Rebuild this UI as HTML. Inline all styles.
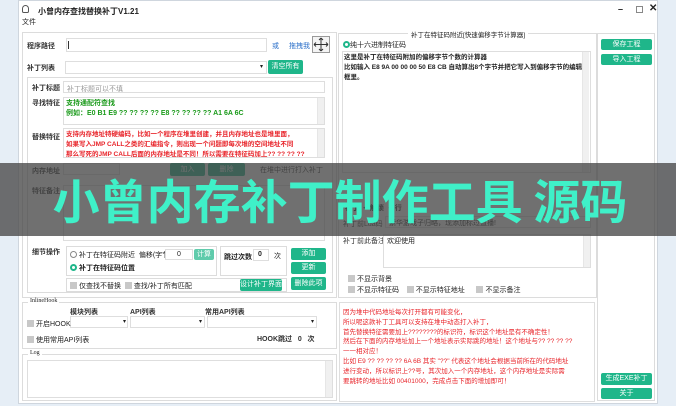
<!DOCTYPE html>
<html><head><meta charset="utf-8"><style>
*{margin:0;padding:0;box-sizing:border-box}
body{width:676px;height:406px;overflow:hidden;background:#e6eef6;font-family:"Liberation Sans","Noto Sans CJK SC",sans-serif;font-size:7px;color:#222;position:relative}
.a{position:absolute}
.win{left:18px;top:0;width:640px;height:404px;background:#fff;border:1px solid #cfd6de}
.box{position:absolute;border:1px solid #dcdcdc;background:#fff}
.inp{position:absolute;border:1px solid #dedede;background:#fff}
.lbl{position:absolute;font-weight:bold;font-size:7px;color:#333;white-space:nowrap}
.btn{position:absolute;background:#1fb68a;color:#fff;font-size:7px;text-align:center;border-radius:2px;white-space:nowrap}
.cb{display:inline-block;width:7px;height:7px;background:#c8c8c8;vertical-align:-1px;margin-right:2px}
.t{position:absolute;white-space:nowrap}
.sb{position:absolute;width:7px;background:#f0f0f0;border-left:1px solid #e6e6e6}
</style></head><body>
<div class="a win"></div>
<div class="a" style="left:22px;top:5px;width:7px;height:8px;border:1px solid #555;border-radius:4px 4px 2px 2px"></div>
<div class="t" style="left:38px;top:6px;font-size:8px;font-weight:bold">小曾内存查找替换补丁V1.21</div>
<div class="t" style="left:618px;top:4px;font-size:9px;font-weight:bold">–</div>
<div class="a" style="left:636px;top:6px;width:7px;height:7px;border:1px solid #888"></div>
<div class="t" style="left:649px;top:3px;font-size:10px;font-weight:bold">✕</div>
<div class="t" style="left:22px;top:17px;font-size:7px">文件</div>

<div class="box" style="left:22px;top:32px;width:315px;height:266px"></div>
<div class="lbl" style="left:27px;top:41px">程序路径</div>
<div class="inp" style="left:66px;top:38px;width:201px;height:14px"></div>
<div class="a" style="left:68px;top:41px;width:1px;height:8px;background:#333"></div>
<div class="t" style="left:272px;top:41px;color:#2a6fc9">或</div>
<div class="t" style="left:289px;top:41px;color:#2a6fc9">拖拽我</div>
<svg class="a" style="left:312px;top:36px" width="18" height="17"><rect x="0.5" y="0.5" width="17" height="16" fill="#f4f4f4" stroke="#999"/><path d="M9 2V15M2 8.5H16" stroke="#333"/><path d="M9 2l-2 2M9 2l2 2M9 15l-2-2M9 15l2-2M2 8.5l2-2M2 8.5l2 2M16 8.5l-2-2M16 8.5l-2 2" stroke="#333" fill="none"/></svg>
<div class="lbl" style="left:27px;top:63px">补丁列表</div>
<div class="inp" style="left:65px;top:61px;width:202px;height:13px"></div>
<div class="t" style="left:260px;top:63px;font-size:6px">▾</div>
<div class="btn" style="left:268px;top:60px;width:35px;height:14px;line-height:14px">清空所有</div>

<div class="box" style="left:27px;top:77px;width:306px;height:216px"></div>
<div class="lbl" style="left:32px;top:83px">补丁标题</div>
<div class="inp" style="left:63px;top:81px;width:262px;height:12px"></div>
<div class="t" style="left:67px;top:84px;color:#999">补丁标题可以不填</div>
<div class="lbl" style="left:32px;top:98px">寻找特征</div>
<div class="inp" style="left:63px;top:97px;width:262px;height:28px"></div>
<div class="sb" style="left:317px;top:98px;height:26px"></div>
<div class="t" style="left:66px;top:99px;color:#1a9a1a;font-weight:bold;line-height:10px">支持通配符查找<br>例如：E0 B1 E9 ?? ?? ?? ?? E8 ?? ?? ?? ?? A1 6A 6C</div>
<div class="lbl" style="left:32px;top:132px">替换特征</div>
<div class="inp" style="left:63px;top:128px;width:262px;height:30px"></div>
<div class="sb" style="left:317px;top:129px;height:28px"></div>
<div class="t" style="left:66px;top:130px;color:#e8242a;font-weight:bold;line-height:10px;font-size:6.5px">支持内存地址特硬编码，比如一个程序在堆里创建，并且内存地址也是堆里面，<br>如果写入JMP CALL之类的汇编指令，则出现一个问题即每次堆的空间地址不同<br>那么写死的JMP CALL后面的内存地址是不同！所以需要在特征码加上?? ?? ?? ??</div>
<div class="lbl" style="left:32px;top:166px">内存地址</div>
<div class="inp" style="left:63px;top:163px;width:57px;height:12px"></div>
<div class="btn" style="left:170px;top:163px;width:35px;height:13px;line-height:13px">加入</div>
<div class="btn" style="left:208px;top:163px;width:37px;height:13px;line-height:13px">删除</div>
<div class="lbl" style="left:260px;top:165px;font-weight:normal">在堆中进行打入补丁</div>
<div class="lbl" style="left:32px;top:186px">特征备注</div>
<div class="inp" style="left:63px;top:185px;width:262px;height:56px"></div>
<div class="lbl" style="left:32px;top:247px">细节操作</div>
<div class="box" style="left:66px;top:246px;width:151px;height:30px"></div>
<div class="t" style="left:70px;top:250px"><span style="display:inline-block;width:7px;height:7px;border:1px solid #888;border-radius:50%;vertical-align:-1px"></span> 补丁在特征码附近&nbsp; 偏移(字节)</div>
<div class="inp" style="left:165px;top:249px;width:28px;height:11px"></div>
<div class="t" style="left:177px;top:251px">0</div>
<div class="btn" style="left:194px;top:249px;width:20px;height:11px;line-height:11px;background:#5fcbab">计算</div>
<div class="t" style="left:70px;top:263px;font-weight:bold"><span style="display:inline-block;width:7px;height:7px;border:2px solid #1fb68a;border-radius:50%;vertical-align:-1px"></span> 补丁在特征码位置</div>
<div class="box" style="left:220px;top:246px;width:67px;height:30px"></div>
<div class="t" style="left:224px;top:252px;font-weight:bold">跳过次数</div>
<div class="inp" style="left:253px;top:249px;width:16px;height:12px"></div>
<div class="t" style="left:258px;top:251px;font-weight:bold">0</div>
<div class="t" style="left:274px;top:251px">次</div>
<div class="btn" style="left:291px;top:248px;width:35px;height:12px;line-height:12px">添加</div>
<div class="btn" style="left:291px;top:262px;width:35px;height:12px;line-height:12px">更新</div>
<div class="btn" style="left:291px;top:277px;width:35px;height:13px;line-height:13px">删除此项</div>
<div class="box" style="left:66px;top:278px;width:221px;height:14px"></div>
<div class="t" style="left:70px;top:281px"><span class="cb"></span>仅查找不替换 &nbsp;<span class="cb"></span>查找/补丁所有匹配</div>
<div class="btn" style="left:240px;top:279px;width:42px;height:12px;line-height:12px">设计补丁界面</div>

<div class="box" style="left:22px;top:302px;width:315px;height:47px"></div>
<div class="t" style="left:28px;top:298px;background:#fff;padding:0 2px;font-family:'Liberation Serif',serif;font-size:6px">InlineHook</div>
<div class="lbl" style="left:70px;top:307px">模块列表</div>
<div class="lbl" style="left:130px;top:307px">API列表</div>
<div class="lbl" style="left:205px;top:307px">常用API列表</div>
<div class="inp" style="left:70px;top:316px;width:58px;height:12px"></div>
<div class="inp" style="left:130px;top:316px;width:75px;height:12px"></div>
<div class="inp" style="left:207px;top:316px;width:110px;height:12px"></div>
<div class="t" style="left:123px;top:318px;font-size:6px">▾</div>
<div class="t" style="left:199px;top:318px;font-size:6px">▾</div>
<div class="t" style="left:311px;top:318px;font-size:6px">▾</div>
<div class="t" style="left:27px;top:319px"><span class="cb"></span>开启HOOK</div>
<div class="t" style="left:27px;top:335px"><span class="cb"></span>使用常用API列表</div>
<div class="lbl" style="left:257px;top:334px">HOOK跳过 &nbsp; 0 &nbsp; 次</div>

<div class="box" style="left:22px;top:354px;width:315px;height:47px"></div>
<div class="t" style="left:28px;top:350px;background:#fff;padding:0 2px;font-family:'Liberation Serif',serif;font-size:6px">Log</div>
<div class="inp" style="left:27px;top:360px;width:306px;height:38px"></div>
<div class="sb" style="left:325px;top:361px;height:36px"></div>

<div class="box" style="left:338px;top:33px;width:259px;height:265px"></div>
<div class="t" style="left:408px;top:29px;background:#fff;padding:0 3px;font-size:6.5px">补丁在特征码附近[快速偏移字节计算器]</div>
<div class="t" style="left:343px;top:40px"><span style="display:inline-block;width:7px;height:7px;border:2px solid #1fb68a;border-radius:50%;vertical-align:-1px"></span>纯十六进制特征码</div>
<div class="inp" style="left:342px;top:51px;width:249px;height:122px"></div>
<div class="sb" style="left:582px;top:52px;height:120px"></div>
<div class="t" style="left:344px;top:53px;font-weight:bold;line-height:10px;font-size:6.5px">这里是补丁在特征码附加的偏移字节个数的计算器<br>比如输入 E8 9A 00 00 00 50 E8 CB 自动算出8个字节并把它写入到偏移字节的编辑<br>框里。</div>
<div class="t" style="left:345px;top:203px;font-weight:bold">补丁 ・ 解锁 ・ 行</div>
<div class="lbl" style="left:343px;top:219px;font-weight:normal">补丁前Lua码</div>
<div class="inp" style="left:385px;top:216px;width:206px;height:12px"></div>
<div class="t" style="left:389px;top:218px">紫华游戏子归略，现添加标过直播!</div>
<div class="lbl" style="left:343px;top:236px;font-weight:normal">补丁前此备注</div>
<div class="inp" style="left:383px;top:234px;width:208px;height:34px"></div>
<div class="sb" style="left:583px;top:235px;height:32px"></div>
<div class="t" style="left:387px;top:236px">欢迎使用</div>
<div class="t" style="left:348px;top:274px"><span class="cb"></span>不显示背景</div>
<div class="t" style="left:348px;top:285px"><span class="cb"></span>不显示特征码 &nbsp; &nbsp;<span class="cb"></span>不显示特征地址 &nbsp; &nbsp; &nbsp;<span class="cb"></span>不显示备注</div>

<div class="inp" style="left:339px;top:302px;width:256px;height:100px"></div>
<div class="t" style="left:343px;top:308px;color:#e8242a;line-height:9.8px;font-size:6.5px">因为堆中代码地址每次打开都有可能变化，<br>所以呢这款补丁工具可以支持在堆中动态打入补丁，<br>首先替换特征需要加上????????的标识符，标识这个地址是有不确定性！<br>然后在下面的内存地址加上一个地址表示实际跳的地址！这个地址与?? ?? ?? ??<br>一一相对应！<br>比如 E9 ?? ?? ?? ?? 6A 6B 其实 "??" 代表这个地址会根据当前所在的代码地址<br>进行变动，所以标识上??号，其次加入一个内存地址，这个内存地址是实际需<br>要跳转的地址比如 00401000，完成点击下面的增加即可！</div>

<div class="box" style="left:597px;top:33px;width:58px;height:368px"></div>
<div class="btn" style="left:601px;top:39px;width:51px;height:11px;line-height:11px">保存工程</div>
<div class="btn" style="left:601px;top:54px;width:51px;height:11px;line-height:11px">导入工程</div>
<div class="btn" style="left:601px;top:373px;width:51px;height:12px;line-height:12px">生成EXE补丁</div>
<div class="btn" style="left:601px;top:388px;width:51px;height:11px;line-height:11px">关于</div>

<div class="a" style="left:0;top:163px;width:676px;height:73px;background:rgba(72,72,72,0.78)"></div>
<div class="t" style="left:40px;top:169px;width:600px;text-align:center;font-size:47px;line-height:60px;font-weight:bold;color:#3ff0c8;font-family:'Noto Sans CJK SC',sans-serif">小曾内存补丁制作工具 源码</div>
</body></html>
